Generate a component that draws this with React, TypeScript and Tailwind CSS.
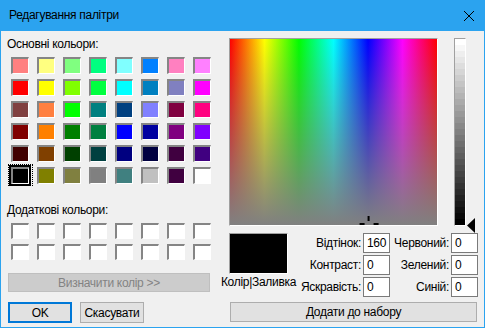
import React from "react";

const basic: string[][] = [
  ["#FF8080", "#FFFF80", "#80FF80", "#00FF80", "#80FFFF", "#0080FF", "#FF80C0", "#FF80FF"],
  ["#FF0000", "#FFFF00", "#80FF00", "#00FF40", "#00FFFF", "#0080C0", "#8080C0", "#FF00FF"],
  ["#804040", "#FF8040", "#00FF00", "#008080", "#004080", "#8080FF", "#800040", "#FF0080"],
  ["#800000", "#FF8000", "#008000", "#008040", "#0000FF", "#0000A0", "#800080", "#8000FF"],
  ["#400000", "#804000", "#004000", "#004040", "#000080", "#000040", "#400040", "#400080"],
  ["#000000", "#808000", "#808040", "#808080", "#408080", "#C0C0C0", "#400040", "#FFFFFF"],
];

function Swatch({ color, selected, h }: { color: string; selected?: boolean; h: string }) {
  return (
    <div className={`relative w-[18px] ${h}`}>
      {selected && (
        <span className="absolute left-[-3px] top-[-3px] right-[-4px] bottom-[-2px] border border-dotted border-black" />
      )}
      <div
        className={`relative w-full h-full border-t-2 border-l-2 border-t-[#858585] border-l-[#858585] border-r border-b border-r-white border-b-white ${
          selected ? "outline-2 outline-black" : ""
        }`}
        style={{ backgroundColor: color }}
      />
    </div>
  );
}

function Spectrum() {
  const cx = (160 / 239) * 207;
  return (
    <svg width="207" height="186" className="block">
      <defs>
        <linearGradient id="hue" x1="0" y1="0" x2="1" y2="0">
          <stop offset="0" stopColor="#ff0000" />
          <stop offset="0.1667" stopColor="#ffff00" />
          <stop offset="0.3333" stopColor="#00ff00" />
          <stop offset="0.5" stopColor="#00ffff" />
          <stop offset="0.6667" stopColor="#0000ff" />
          <stop offset="0.8333" stopColor="#ff00ff" />
          <stop offset="1" stopColor="#ff0000" />
        </linearGradient>
        <linearGradient id="sat" x1="0" y1="0" x2="0" y2="1">
          <stop offset="0" stopColor="#808080" stopOpacity="0" />
          <stop offset="1" stopColor="#808080" stopOpacity="1" />
        </linearGradient>
      </defs>
      <rect x="0" y="0" width="207" height="186" fill="url(#hue)" />
      <rect x="0" y="0" width="207" height="186" fill="url(#sat)" />
      <rect x={cx - 1} y="177" width="2" height="5" fill="#000" />
      <rect x={cx - 9} y="184" width="5" height="2" fill="#000" />
      <rect x={cx + 5} y="184" width="5" height="2" fill="#000" />
    </svg>
  );
}

function LumBar() {
  const n = 31;
  const bandH = 186 / n;
  return (
    <svg width="10" height="186" className="block">
      {Array.from({ length: n }).map((_, i) => {
        const v = Math.round(255 - (255 * i) / (n - 1));
        return (
          <rect
            key={i}
            x="0"
            y={i * bandH}
            width="10"
            height={bandH + 0.5}
            fill={`rgb(${v},${v},${v})`}
          />
        );
      })}
    </svg>
  );
}

function Field({ value }: { value: string }) {
  return (
    <div className="h-[20px] w-[27px] bg-white border border-[#7a7a7a] pl-[3px] leading-[18px]">
      {value}
    </div>
  );
}

export default function App() {
  const font = { fontFamily: '"Liberation Sans", Arial, sans-serif' };
  return (
    <div
      className="w-[485px] h-[328px] bg-[#f0f0f0] flex flex-col text-[12px] tracking-[-0.3px] text-black overflow-hidden"
      style={font}
    >
      <div className="h-[31px] bg-[#2ba3ef] flex items-center pl-[9px] pr-[11px] shrink-0">
        <span className="flex-1 leading-[15px]">Редагування палітри</span>
        <svg width="10" height="10" viewBox="0 0 10 10" className="block">
          <path d="M0 0 L10 10 M10 0 L0 10" stroke="#000" strokeWidth="1" />
        </svg>
      </div>
      <div className="flex-1 flex border-x border-b border-[#2ba3ef]">
        {/* Left column */}
        <div className="w-[219px] shrink-0 flex flex-col pl-[6px] pt-[6px]">
          <div className="leading-[15px]">Основні кольори:</div>
          <div className="ml-[4px] mt-[5px] grid grid-cols-[repeat(8,18px)] gap-x-[8px] gap-y-[5px]">
            {basic.flatMap((row, r) =>
              row.map((c, i) => (
                <Swatch key={`${r}-${i}`} color={c} h="h-[17px]" selected={r === 5 && i === 0} />
              ))
            )}
          </div>
          <div className="leading-[15px] mt-[19px]">Додаткові кольори:</div>
          <div className="ml-[4px] mt-[5px] grid grid-cols-[repeat(8,18px)] gap-x-[8px] gap-y-[5px]">
            {Array.from({ length: 16 }).map((_, i) => (
              <Swatch key={i} color="#FFFFFF" h="h-[16px]" />
            ))}
          </div>
          <div className="ml-[1px] mt-[13px] w-[202px] h-[19px] bg-[#cccccc] border border-[#bfbfbf] text-[#838383] flex items-center justify-center">
            Визначити колір &gt;&gt;
          </div>
          <div className="ml-[1px] mt-[10px] flex gap-[8px]">
            <div className="w-[64px] h-[21px] bg-[#e1e1e1] border-2 border-[#0078d7] flex items-center justify-center">
              OK
            </div>
            <div className="w-[64px] h-[21px] bg-[#e1e1e1] border border-[#adadad] flex items-center justify-center">
              Скасувати
            </div>
          </div>
        </div>
        {/* Right column */}
        <div className="flex-1 flex flex-col pl-[9px] pt-[7px]">
          <div className="flex">
            <div className="border-t border-l border-t-[#a0a0a0] border-l-[#a0a0a0] border-b border-r border-b-white border-r-white">
              <Spectrum />
            </div>
            <div className="relative ml-[16px]">
              <div className="border-t border-l border-t-[#a0a0a0] border-l-[#a0a0a0] border-b border-r border-b-white border-r-white">
                <LumBar />
              </div>
              <svg
                width="8"
                height="15"
                viewBox="0 0 8 15"
                className="absolute left-[13px] top-[180px] block"
              >
                <path d="M0 7.5 L8 0 L8 15 Z" fill="#000" />
              </svg>
            </div>
          </div>
          <div className="flex mt-[7px]">
            <div className="w-[59px] flex flex-col items-center">
              <div className="w-[59px] h-[41px] bg-black border-t border-l border-t-[#a0a0a0] border-l-[#a0a0a0] border-b border-r border-b-white border-r-white" />
              <div className="mt-[1px] leading-[15px] whitespace-nowrap">Колір|Заливка</div>
            </div>
            <div className="grid grid-cols-[73px_27px_57px_27px] gap-x-[2px] gap-y-[2px] auto-rows-[20px]">
              <div className="text-right leading-[20px]">Відтінок:</div>
              <Field value="160" />
              <div className="text-right leading-[20px]">Червоний:</div>
              <Field value="0" />
              <div className="text-right leading-[20px] whitespace-nowrap">Контраст:</div>
              <Field value="0" />
              <div className="text-right leading-[20px]">Зелений:</div>
              <Field value="0" />
              <div className="text-right leading-[20px] whitespace-nowrap">Яскравість:</div>
              <Field value="0" />
              <div className="text-right leading-[20px]">Синій:</div>
              <Field value="0" />
            </div>
          </div>
          <div className="ml-[1px] mt-[5px] w-[247px] h-[20px] bg-[#e1e1e1] border border-[#adadad] flex items-center justify-center">
            Додати до набору
          </div>
        </div>
      </div>
    </div>
  );
}
